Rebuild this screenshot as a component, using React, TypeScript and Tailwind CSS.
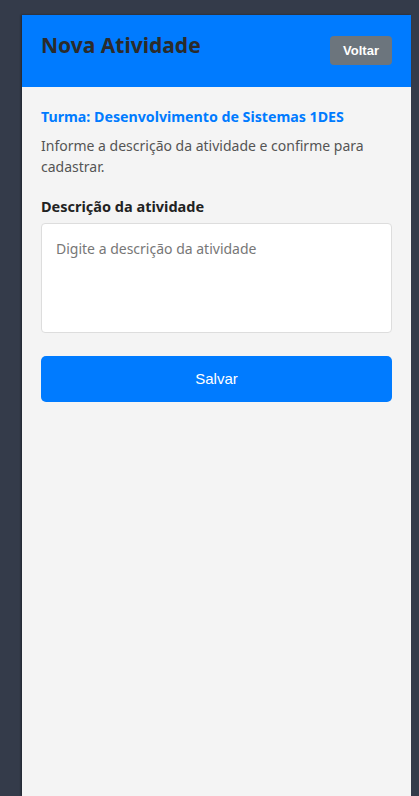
export default function App() {
  return (
    <div
      className="min-h-[796px] bg-[#343b4a] pt-[15px] pl-[22px] pr-[8px]"
      style={{ fontFamily: '"Noto Sans", "Open Sans", sans-serif' }}
    >
      <div className="flex min-h-[781px] flex-col bg-[#f4f4f4] shadow-[-1px_0_2px_rgba(0,0,0,0.4)]">
        <header className="flex h-[72px] items-start justify-between bg-[#007bff] px-[19px] pt-[16px]">
          <h1 className="text-[21px] leading-[28px] font-bold text-[#2b2b2b]">Nova Atividade</h1>
          <button
            className="mt-[5px] h-[29px] rounded-[4px] bg-[#6c757d] px-[13px] text-[13px] font-bold text-white"
            style={{ fontFamily: '"Liberation Sans", Arial, sans-serif' }}
          >
            Voltar
          </button>
        </header>
        <main className="flex flex-col px-[19px] pt-[20px]">
          <h2 className="text-[14.2px] leading-[20px] font-bold text-[#007bff]">
            Turma: Desenvolvimento de Sistemas 1DES
          </h2>
          <p className="mt-[8px] text-[14px] leading-[21px] text-[#555]">
            Informe a descrição da atividade e confirme para cadastrar.
          </p>
          <label className="mt-[19px] text-[14.5px] leading-[20px] font-bold text-[#222]">
            Descrição da atividade
          </label>
          <textarea
            className="mt-[7px] h-[110px] resize-none rounded-[4px] border border-[#ddd] bg-white px-[14px] py-[14px] text-[14px] text-[#333] placeholder:text-[#777] outline-none"
            placeholder="Digite a descrição da atividade"
          />
          <button
            className="mt-[23px] h-[46px] rounded-[5px] bg-[#007bff] text-[15px] text-white"
            style={{ fontFamily: '"Liberation Sans", Arial, sans-serif' }}
          >
            Salvar
          </button>
        </main>
      </div>
    </div>
  );
}
